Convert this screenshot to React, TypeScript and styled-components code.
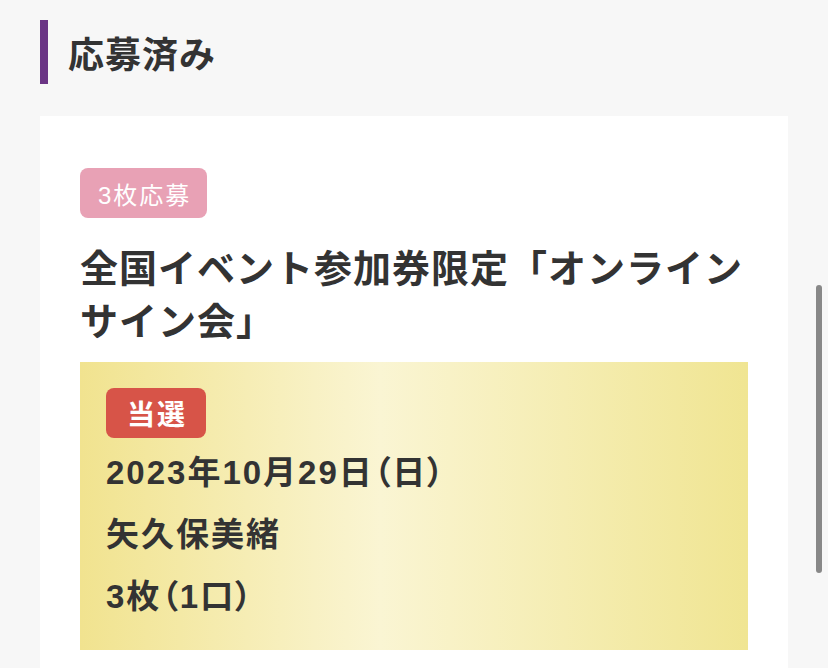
import styled, { createGlobalStyle } from "styled-components";

const GlobalStyle = createGlobalStyle`
  html, body {
    margin: 0;
    padding: 0;
    background: #f7f7f7;
    font-family: "Liberation Sans", "Noto Sans CJK JP", sans-serif;
    color: #333;
  }
`;

const Page = styled.div`
  position: relative;
  width: 828px;
  height: 668px;
  overflow: hidden;
  padding: 20px 40px 0 40px;
  box-sizing: border-box;
`;

const Heading = styled.h2`
  display: flex;
  align-items: center;
  height: 64px;
  margin: 0;
  font-family: "Noto Sans CJK JP", sans-serif;
  font-size: 36px;
  font-weight: 700;
  letter-spacing: 1px;
  color: #333;

  &::before {
    content: "";
    width: 8px;
    height: 64px;
    background: #6b3585;
    margin-right: 20px;
  }
`;

const Card = styled.div`
  margin-top: 32px;
  background: #fff;
  padding: 52px 40px 40px;
`;

const Badge = styled.span<{ $bg: string; $bold?: boolean }>`
  display: inline-flex;
  align-items: center;
  justify-content: center;
  height: 50px;
  padding: ${(p) => (p.$bold ? "0 19px 0 21px" : "0 16px 0 18px")};
  border-radius: 8px;
  background: ${(p) => p.$bg};
  color: #fff;
  font-size: ${(p) => (p.$bold ? "28px" : "24px")};
  font-weight: ${(p) => (p.$bold ? 700 : 400)};
  letter-spacing: 2px;
`;

const Title = styled.h3`
  margin: 21px 0 17px;
  font-family: "Noto Sans CJK JP", sans-serif;
  font-size: 38px;
  line-height: 53px;
  font-weight: 700;
  letter-spacing: 1px;
  color: #333;
`;

const ResultBox = styled.div`
  background: linear-gradient(to right, #f1e38f 0%, #faf5d3 45%, #f0e592 100%);
  padding: 26px 26px 22px;
`;

const InfoLine = styled.p`
  margin: 0;
  font-size: 33px;
  line-height: 62px;
  font-weight: 700;
  letter-spacing: 2px;
  font-feature-settings: "palt";
  color: #333;

  &:first-of-type {
    margin-top: 4px;
  }
`;

const Scrollbar = styled.div`
  position: absolute;
  top: 285px;
  left: 816px;
  width: 6px;
  height: 288px;
  border-radius: 3px;
  background: #888;
`;

export default function App() {
  return (
    <>
      <GlobalStyle />
      <Page>
        <Heading>応募済み</Heading>
        <Card>
          <Badge $bg="#e8a1b5">3枚応募</Badge>
          <Title>全国イベント参加券限定「オンラインサイン会」</Title>
          <ResultBox>
            <Badge $bg="#d75448" $bold>
              当選
            </Badge>
            <InfoLine>2023年10月29日（日）</InfoLine>
            <InfoLine>矢久保美緒</InfoLine>
            <InfoLine>3枚（1口）</InfoLine>
          </ResultBox>
        </Card>
        <Scrollbar />
      </Page>
    </>
  );
}
